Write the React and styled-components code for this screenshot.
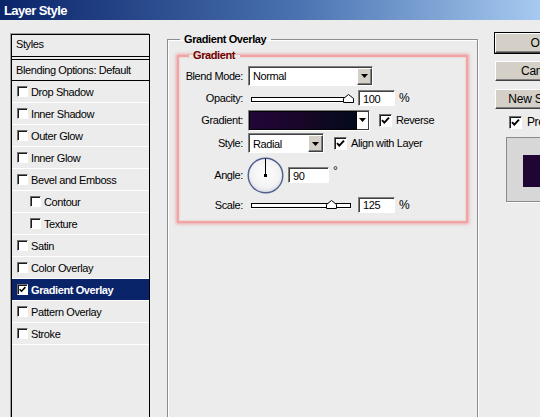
import React from "react";
import styled, { createGlobalStyle } from "styled-components";

const effects = [
  { name: "Drop Shadow" },
  { name: "Inner Shadow" },
  { name: "Outer Glow" },
  { name: "Inner Glow" },
  { name: "Bevel and Emboss" },
  { name: "Contour", sub: true },
  { name: "Texture", sub: true },
  { name: "Satin" },
  { name: "Color Overlay" },
  { name: "Gradient Overlay", checked: true, active: true },
  { name: "Pattern Overlay" },
  { name: "Stroke" },
];

// scale slider runs 10..150 in photoshop
const toFrac = (v, min, max) => (v - min) / (max - min);

const GlobalStyle = createGlobalStyle`
  html, body {
    margin: 0;
    padding: 0;
    background: #ececec;
  }
  body {
    font-family: "Liberation Sans", Arial, sans-serif;
    font-size: 11px;
    letter-spacing: -0.4px;
    color: #000;
  }
  * {
    box-sizing: border-box;
  }
`;

const Check = ({ checked, size = 13 }) => (
  <CheckBox $size={size}>
    {checked && (
      <svg width={size - 2} height={size - 2} viewBox="0 0 11 11">
        <polyline
          points="2,5.2 4.3,7.6 9,2.6"
          fill="none"
          stroke="#000"
          strokeWidth="1.9"
        />
      </svg>
    )}
  </CheckBox>
);

const Tri = () => (
  <svg width="7" height="4" viewBox="0 0 7 4">
    <polygon points="0,0 7,0 3.5,4" fill="#000" />
  </svg>
);

const Slider = ({ frac }) => (
  <SliderBox>
    <Track />
    <Thumb style={{ left: Math.round(frac * 97) - 5 }}>
      <svg width="11" height="9" viewBox="0 0 11 9">
        <polygon
          points="0.5,8.5 0.5,4.5 5.5,0.5 10.5,4.5 10.5,8.5"
          fill="#fff"
          stroke="#000"
        />
      </svg>
    </Thumb>
  </SliderBox>
);

const Dial = () => (
  <svg width="37" height="37" viewBox="0 0 37 37">
    <defs>
      <radialGradient id="dialFill" cx="50%" cy="45%" r="55%">
        <stop offset="0%" stopColor="#ffffff" />
        <stop offset="75%" stopColor="#f2f2f2" />
        <stop offset="100%" stopColor="#d8dbe4" />
      </radialGradient>
    </defs>
    <circle cx="18.5" cy="18.5" r="17.3" fill="url(#dialFill)" stroke="#4e5f8e" strokeWidth="1.4" />
    <line x1="18.5" y1="18.5" x2="18.5" y2="1.5" stroke="#000" strokeWidth="1" />
    <rect x="17" y="17" width="3" height="3" fill="#000" />
  </svg>
);

const App = () => {
  return (
    <Window>
      <GlobalStyle />
      <TitleBar>Layer Style</TitleBar>
      <Body>
        <StyleList>
          <HeadRow>Styles</HeadRow>
          <BlendRow>Blending Options: Default</BlendRow>
          {effects.map((fx) => (
            <EffectRow key={fx.name} $sub={fx.sub} $active={fx.active}>
              <Check checked={fx.checked} size={11} />
              <span>{fx.name}</span>
            </EffectRow>
          ))}
        </StyleList>

        <Group>
          <GroupLegend>Gradient Overlay</GroupLegend>
          <GlowGroup>
            <GlowLegend>Gradient</GlowLegend>

            <Row $h={23}>
              <Label>Blend Mode:</Label>
              <Select $w={125}>
                <span>Normal</span>
                <DropButton>
                  <Tri />
                </DropButton>
              </Select>
            </Row>

            <Row $h={22}>
              <Label>Opacity:</Label>
              <Slider frac={1} />
              <NumberBox $w={37}>100</NumberBox>
              <Unit>%</Unit>
            </Row>

            <Row $h={22}>
              <Label>Gradient:</Label>
              <GradientField>
                <Swatch />
                <SwatchArrow>
                  <Tri />
                </SwatchArrow>
              </GradientField>
              <CheckLabel $gap={9}>
                <Check checked />
                <span>Reverse</span>
              </CheckLabel>
            </Row>

            <Row $h={24}>
              <Label>Style:</Label>
              <Select $w={76}>
                <span>Radial</span>
                <DropButton>
                  <Tri />
                </DropButton>
              </Select>
              <CheckLabel $gap={10}>
                <Check checked />
                <span>Align with Layer</span>
              </CheckLabel>
            </Row>

            <Row $h={40}>
              <Label>Angle:</Label>
              <DialBox>
                <Dial />
              </DialBox>
              <NumberBox $w={41} $gap={4}>90</NumberBox>
              <Degree>°</Degree>
            </Row>

            <Row $h={19}>
              <Label>Scale:</Label>
              <Slider frac={toFrac(125, 10, 150)} />
              <NumberBox $w={37}>125</NumberBox>
              <Unit>%</Unit>
            </Row>
          </GlowGroup>
        </Group>

        <Actions>
          <Button $default>OK</Button>
          <Button>Cancel</Button>
          <Button>New Style...</Button>
          <PreviewCheck>
            <Check checked />
            <span>Preview</span>
          </PreviewCheck>
          <PreviewFrame>
            <PreviewSwatch />
          </PreviewFrame>
        </Actions>
      </Body>
    </Window>
  );
};

export default App;

//? <-- COMPONENT STYLES --> //
const Window = styled.div`
  width: 540px;
  height: 417px;
  overflow: hidden;
  display: flex;
  flex-direction: column;
  background: #ececec;
`;

const TitleBar = styled.div`
  flex: none;
  height: 20px;
  display: flex;
  align-items: center;
  padding-left: 4px;
  background: linear-gradient(to right, #0a246a 0%, #4a72b0 55%, #a6caf0 100%);
  color: #fff;
  font-weight: bold;
  font-size: 13px;
  letter-spacing: -0.6px;
`;

const Body = styled.div`
  flex: none;
  height: 420px;
  display: flex;
  padding: 13px 0 0 11px;
`;

const StyleList = styled.div`
  flex: none;
  width: 139px;
  margin-top: 1px;
  border: 1px solid #000;
  box-shadow: -1px -1px 0 #a0a0a0;
  display: flex;
  flex-direction: column;
`;

const HeadRow = styled.div`
  height: 25px;
  padding: 0 0 3px 4px;
  display: flex;
  align-items: center;
  border-bottom: 4px double #000;
`;

const BlendRow = styled.div`
  height: 21px;
  padding-left: 4px;
  display: flex;
  align-items: center;
  border-bottom: 1px solid #000;
`;

const EffectRow = styled.div`
  height: 22px;
  display: flex;
  align-items: center;
  gap: 3px;
  padding-left: ${(p) => (p.$sub ? 18 : 5)}px;
  border-bottom: 1px solid #fff;
  background: ${(p) => (p.$active ? "#0a246a" : "transparent")};
  color: ${(p) => (p.$active ? "#fff" : "#000")};
  font-weight: ${(p) => (p.$active ? "bold" : "normal")};
`;

const CheckBox = styled.span`
  flex: none;
  width: ${(p) => p.$size}px;
  height: ${(p) => p.$size}px;
  display: inline-flex;
  align-items: center;
  justify-content: center;
  background: #fff;
  border: 1px solid;
  border-color: #6f6f6f #fff #fff #6f6f6f;
  box-shadow: inset 1px 1px 0 #1a1a1a;
`;

const Group = styled.fieldset`
  flex: none;
  width: 311px;
  margin: 0 0 0 17px;
  min-width: 0;
  padding: 0 9px;
  border: 1px solid #8e8e8e;
  box-shadow: inset 1px 1px 0 #fff, 1px 1px 0 #fff;
`;

const GroupLegend = styled.legend`
  margin-left: 3px;
  padding: 0 5px 0 4px;
  font-weight: bold;
  line-height: 13px;
`;

const GlowGroup = styled.fieldset`
  margin: 3px 0 0;
  min-width: 0;
  padding: 2px 0 7px;
  border: 2px solid #f2a3a3;
  box-shadow: 0 0 3px 1px rgba(238, 110, 110, 0.55),
    inset 0 0 2px rgba(238, 110, 110, 0.45);
`;

const GlowLegend = styled.legend`
  margin-left: 10px;
  padding: 0 5px 0 4px;
  font-weight: bold;
  line-height: 13px;
  color: #6e0000;
`;

const Row = styled.div`
  height: ${(p) => p.$h}px;
  display: flex;
  align-items: center;
`;

const Label = styled.span`
  flex: none;
  width: 64px;
  margin-right: 5px;
  text-align: right;
  white-space: nowrap;
`;

const Select = styled.div`
  flex: none;
  width: ${(p) => p.$w}px;
  height: 20px;
  display: flex;
  align-items: stretch;
  justify-content: space-between;
  background: #fff;
  border: 1px solid;
  border-color: #808080 #fff #fff #808080;
  box-shadow: inset 1px 1px 0 #404040;

  span {
    display: flex;
    align-items: center;
    padding: 1px 0 0 4px;
  }
`;

const DropButton = styled.div`
  flex: none;
  width: 15px;
  margin: 1px 0 0;
  display: flex;
  align-items: center;
  justify-content: center;
  background: #d4d0c8;
  border: 1px solid;
  border-color: #fff #404040 #404040 #fff;
  box-shadow: inset -1px -1px 0 #808080;
`;

const SliderBox = styled.div`
  flex: none;
  position: relative;
  width: 100px;
  height: 9px;
  margin: 0 7px 0 3px;
  display: flex;
  align-items: flex-end;
`;

const Track = styled.div`
  width: 100%;
  height: 5px;
  margin-bottom: 1px;
  background: #fff;
  border: 1px solid #000;
  box-shadow: 0 1px 0 #fff;
`;

const Thumb = styled.div`
  position: absolute;
  bottom: 0;
  width: 11px;
  height: 9px;
  display: flex;

  svg {
    display: block;
  }
`;

const NumberBox = styled.div`
  flex: none;
  width: ${(p) => p.$w}px;
  height: 16px;
  margin-left: ${(p) => p.$gap || 0}px;
  display: flex;
  align-items: center;
  padding: 1px 0 0 4px;
  background: #fff;
  border: 1px solid;
  border-color: #808080 #fff #fff #808080;
  box-shadow: inset 1px 1px 0 #404040;
`;

const Unit = styled.span`
  margin-left: 4px;
  font-size: 12px;
`;

const Degree = styled.span`
  align-self: flex-start;
  margin: 9px 0 0 4px;
  font-size: 12px;
`;

const GradientField = styled.div`
  flex: none;
  width: 122px;
  height: 21px;
  display: flex;
  border: 1px solid;
  border-color: #808080 #fff #fff #808080;
  background: #fff;
`;

const Swatch = styled.div`
  flex: 1;
  border: 1px solid #000;
  background: linear-gradient(to right, #230538 0%, #160726 55%, #030a1e 100%);
`;

const SwatchArrow = styled.div`
  flex: none;
  width: 12px;
  display: flex;
  align-items: center;
  justify-content: center;
  background: #fff;
  border: 1px solid #3a3a3a;
  border-left: none;
`;

const CheckLabel = styled.label`
  display: flex;
  align-items: center;
  gap: 4px;
  margin-left: ${(p) => p.$gap}px;
  white-space: nowrap;
`;

const DialBox = styled.div`
  flex: none;
  margin-left: -1px;
  display: flex;
`;

const Actions = styled.div`
  flex: none;
  width: 90px;
  margin-left: 17px;
  display: flex;
  flex-direction: column;
`;

const Button = styled.div`
  width: 88px;
  height: 20px;
  margin-bottom: 8px;
  display: flex;
  align-items: center;
  justify-content: center;
  font-size: 12px;
  letter-spacing: -0.2px;
  background: #d4d0c8;
  border: 1px solid;
  border-color: #fff #404040 #404040 #fff;
  box-shadow: inset -1px -1px 0 #808080;
  outline: ${(p) => (p.$default ? "1px solid #000" : "none")};
  outline-offset: 0;
  white-space: nowrap;
`;

const PreviewCheck = styled.label`
  display: flex;
  align-items: center;
  gap: 5px;
  margin: -2px 0 0 14px;
  font-size: 12px;
`;

const PreviewFrame = styled.div`
  width: 66px;
  height: 65px;
  margin: 8px 0 0 11px;
  display: flex;
  align-items: center;
  justify-content: center;
  background: #d7d7d7;
  border: 1px solid #8a8a8a;
  box-shadow: 1px 1px 0 #fff;
`;

const PreviewSwatch = styled.div`
  width: 32px;
  height: 32px;
  margin-top: 2px;
  background: #1e0533;
`;
